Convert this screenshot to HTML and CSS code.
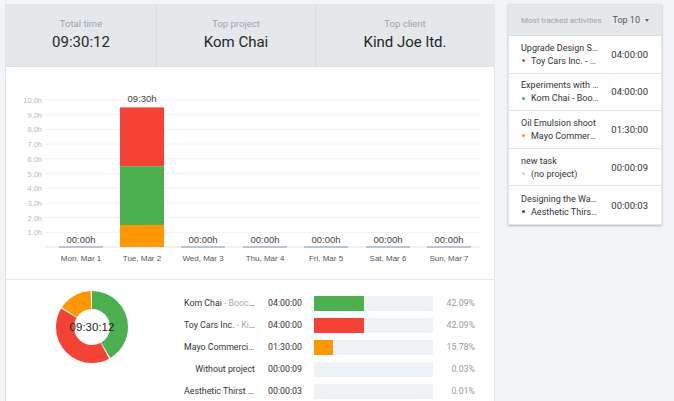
FILE: index.html
```html
<!DOCTYPE html>
<html lang="en">
<head>
  <meta charset="UTF-8">
  <title>Dashboard</title>
  <link rel="stylesheet" href="styles.css">
</head>
<body>
  <div class="main">
    <!-- Summary stats -->
    <div class="stats">
      <div class="stat">
        <span class="stat-label">Total time</span>
        <span class="stat-value">09:30:12</span>
      </div>
      <div class="stat">
        <span class="stat-label">Top project</span>
        <span class="stat-value">Kom Chai</span>
      </div>
      <div class="stat">
        <span class="stat-label">Top client</span>
        <span class="stat-value">Kind Joe ltd.</span>
      </div>
    </div>

    <!-- Bar chart -->
    <div class="chart">
      <svg width="488" height="212" viewBox="6 67 488 212">
        <g class="grid">
          <line x1="45" y1="100" x2="480" y2="100"/>
          <line x1="45" y1="114.7" x2="480" y2="114.7"/>
          <line x1="45" y1="129.4" x2="480" y2="129.4"/>
          <line x1="45" y1="144.1" x2="480" y2="144.1"/>
          <line x1="45" y1="158.8" x2="480" y2="158.8"/>
          <line x1="45" y1="173.5" x2="480" y2="173.5"/>
          <line x1="45" y1="188.2" x2="480" y2="188.2"/>
          <line x1="45" y1="202.9" x2="480" y2="202.9"/>
          <line x1="45" y1="217.6" x2="480" y2="217.6"/>
          <line x1="45" y1="232.3" x2="480" y2="232.3"/>
        </g>
        <g class="ticks">
          <text x="42" y="103">10.0h</text>
          <text x="42" y="117.7">9.0h</text>
          <text x="42" y="132.4">8.0h</text>
          <text x="42" y="147.1">7.0h</text>
          <text x="42" y="161.8">6.0h</text>
          <text x="42" y="176.5">5.0h</text>
          <text x="42" y="191.2">4.0h</text>
          <text x="42" y="205.9">3.0h</text>
          <text x="42" y="220.6">2.0h</text>
          <text x="42" y="235.3">1.0h</text>
        </g>
        <line class="axis" x1="45" y1="247" x2="480" y2="247"/>
        <g class="zero">
          <rect x="59" y="246" width="44" height="2"/>
          <rect x="181" y="246" width="44" height="2"/>
          <rect x="243" y="246" width="44" height="2"/>
          <rect x="304" y="246" width="44" height="2"/>
          <rect x="366" y="246" width="44" height="2"/>
          <rect x="427" y="246" width="44" height="2"/>
        </g>
        <rect x="120" y="107.4" width="44" height="58.8" fill="#f44336"/>
        <rect x="120" y="166.2" width="44" height="58.8" fill="#4caf50"/>
        <rect x="120" y="225" width="44" height="22" fill="#ff9800"/>
        <g class="totals">
          <text x="81" y="243">00:00h</text>
          <text x="142" y="102">09:30h</text>
          <text x="203" y="243">00:00h</text>
          <text x="265" y="243">00:00h</text>
          <text x="326" y="243">00:00h</text>
          <text x="388" y="243">00:00h</text>
          <text x="449" y="243">00:00h</text>
        </g>
        <g class="days">
          <text x="81" y="261">Mon, Mar 1</text>
          <text x="142" y="261">Tue, Mar 2</text>
          <text x="203" y="261">Wed, Mar 3</text>
          <text x="265" y="261">Thu, Mar 4</text>
          <text x="326" y="261">Fri, Mar 5</text>
          <text x="388" y="261">Sat, Mar 6</text>
          <text x="449" y="261">Sun, Mar 7</text>
        </g>
      </svg>
    </div>

    <!-- Project breakdown -->
    <div class="breakdown">
      <div class="donut">
        <svg width="178" height="117" viewBox="6 280 178 117">
          <g transform="rotate(-90 92 327)" fill="none" stroke-width="18">
            <circle cx="92" cy="327" r="27" pathLength="100" stroke="#4caf50" stroke-dasharray="41.5 58.5"/>
            <circle cx="92" cy="327" r="27" pathLength="100" stroke="#f44336" stroke-dasharray="41.5 58.5" stroke-dashoffset="-42.09"/>
            <circle cx="92" cy="327" r="27" pathLength="100" stroke="#ff9800" stroke-dasharray="15.2 84.8" stroke-dashoffset="-84.18"/>
          </g>
          <text x="92" y="331" class="donut-label">09:30:12</text>
        </svg>
      </div>
      <div class="rows">
        <div class="row">
          <span class="name">Kom Chai<span class="client"> - Boocoo</span></span>
          <span class="time">04:00:00</span>
          <span class="track"><span class="fill" style="width: 42.09%; background: #4caf50;"></span></span>
          <span class="pct">42.09%</span>
        </div>
        <div class="row">
          <span class="name">Toy Cars Inc.<span class="client"> - Kind Joe</span></span>
          <span class="time">04:00:00</span>
          <span class="track"><span class="fill" style="width: 42.09%; background: #f44336;"></span></span>
          <span class="pct">42.09%</span>
        </div>
        <div class="row">
          <span class="name">Mayo Commercial</span>
          <span class="time">01:30:00</span>
          <span class="track"><span class="fill" style="width: 15.78%; background: #ff9800;"></span></span>
          <span class="pct">15.78%</span>
        </div>
        <div class="row">
          <span class="name">Without project</span>
          <span class="time">00:00:09</span>
          <span class="track"></span>
          <span class="pct">0.03%</span>
        </div>
        <div class="row">
          <span class="name">Aesthetic Thirst Co</span>
          <span class="time">00:00:03</span>
          <span class="track"></span>
          <span class="pct">0.01%</span>
        </div>
      </div>
    </div>
  </div>

  <!-- Most tracked activities -->
  <div class="side">
    <div class="side-head">
      <span class="side-title">Most tracked activities</span>
      <span class="side-filter">Top 10 <span class="caret"></span></span>
    </div>
    <div class="activity">
      <div class="activity-info">
        <span class="activity-name">Upgrade Design System</span>
        <span class="activity-project"><i class="dot" style="background: #f44336;"></i>Toy Cars Inc. - Kind Joe</span>
      </div>
      <span class="activity-time">04:00:00</span>
    </div>
    <div class="activity">
      <div class="activity-info">
        <span class="activity-name">Experiments with colors</span>
        <span class="activity-project"><i class="dot" style="background: #4caf50;"></i>Kom Chai - Boocoo</span>
      </div>
      <span class="activity-time">04:00:00</span>
    </div>
    <div class="activity">
      <div class="activity-info">
        <span class="activity-name">Oil Emulsion shoot</span>
        <span class="activity-project"><i class="dot" style="background: #ff9800;"></i>Mayo Commercial</span>
      </div>
      <span class="activity-time">01:30:00</span>
    </div>
    <div class="activity">
      <div class="activity-info">
        <span class="activity-name">new task</span>
        <span class="activity-project"><i class="dot" style="background: #d5d8db;"></i>(no project)</span>
      </div>
      <span class="activity-time">00:00:09</span>
    </div>
    <div class="activity">
      <div class="activity-info">
        <span class="activity-name">Designing the Water bottle</span>
        <span class="activity-project"><i class="dot" style="background: #3a3f8f;"></i>Aesthetic Thirst Co</span>
      </div>
      <span class="activity-time">00:00:03</span>
    </div>
  </div>
</body>
</html>
```

FILE: styles.css
```css
* {
  box-sizing: border-box;
  margin: 0;
  padding: 0;
}

body {
  font-family: Roboto, "Liberation Sans", sans-serif;
  background-color: #f2f4f7;
  display: flex;
  align-items: flex-start;
  gap: 13px;
  padding: 4px 0 0 5px;
  height: 401px;
  overflow: hidden;
  color: #333;
}

/* Left panel */
.main {
  width: 490px;
  height: 397px;
  background-color: #ffffff;
  border-left: 1px solid #dbe2e3;
  border-right: 1px solid #e3e7ea;
}

.stats {
  display: grid;
  grid-template-columns: 151px 159px 1fr;
  height: 63px;
  background-color: #e4e8eb;
  border-bottom: 1px solid #dde2e5;
}

.stat {
  display: flex;
  flex-direction: column;
  align-items: center;
  padding-top: 14px;
  border-right: 1px solid #d6dbdf;
}

.stat:last-child {
  border-right: none;
}

.stat-label {
  font-size: 9.5px;
  line-height: 12px;
  color: #9ba5ae;
}

.stat-value {
  font-size: 15px;
  line-height: 18px;
  margin-top: 3px;
  color: #262626;
}

/* Bar chart */
.chart {
  height: 213px;
  border-bottom: 1px solid #e6e9ec;
}

.chart svg {
  display: block;
}

.grid line {
  stroke: #eff1f3;
  stroke-width: 1;
}

.ticks text {
  font-family: "Liberation Sans", sans-serif;
  font-size: 7.5px;
  fill: #b8b8b8;
  text-anchor: end;
}

.axis {
  stroke: #dfe5e9;
  stroke-width: 1;
}

.zero rect {
  fill: #b9c6cf;
}

.totals text {
  font-family: "Liberation Sans", sans-serif;
  font-size: 9.5px;
  fill: #444;
  text-anchor: middle;
}

.days text {
  font-family: "Liberation Sans", sans-serif;
  font-size: 8px;
  fill: #555;
  text-anchor: middle;
}

/* Breakdown */
.breakdown {
  display: flex;
}

.donut svg {
  display: block;
}

.donut-label {
  font-family: "Liberation Sans", sans-serif;
  font-size: 11.5px;
  fill: #1e1e1e;
  text-anchor: middle;
}

.rows {
  padding-top: 12px;
}

.row {
  display: grid;
  grid-template-columns: 71px 59px 119px 42px;
  align-items: center;
  height: 22px;
  font-size: 8.8px;
}

.name {
  text-align: right;
  white-space: nowrap;
  overflow: hidden;
  text-overflow: ellipsis;
  color: #333;
}

.client {
  color: #aaa;
}

.time {
  padding-left: 13px;
  color: #333;
}

.track {
  display: block;
  height: 15px;
  background-color: #eef2f5;
}

.fill {
  display: block;
  height: 100%;
}

.pct {
  text-align: right;
  color: #9a9a9a;
}

/* Right panel */
.side {
  width: 154px;
  background-color: #ffffff;
  box-shadow: 0 1px 2px rgba(0, 0, 0, 0.25);
  border: 1px solid #e1e5e8;
}

.side-head {
  display: flex;
  justify-content: space-between;
  align-items: center;
  height: 31px;
  padding: 0 12px 0 12px;
  background-color: #e4e8eb;
  border-bottom: 1px solid #d9dee2;
}

.side-title {
  font-size: 8px;
  color: #9aa3ab;
}

.side-filter {
  font-size: 9px;
  color: #555;
  display: flex;
  align-items: center;
}

.caret {
  display: inline-block;
  margin-left: 5px;
  border-left: 2.5px solid transparent;
  border-right: 2.5px solid transparent;
  border-top: 3px solid #666;
}

.activity {
  display: flex;
  align-items: center;
  justify-content: space-between;
  height: 37.6px;
  padding: 0 13px 0 12px;
  border-bottom: 1px solid #e3e6e9;
}

.activity:last-child {
  border-bottom: none;
}

.activity-info {
  display: flex;
  flex-direction: column;
  gap: 3px;
  width: 78px;
}

.activity-name,
.activity-project {
  font-size: 9px;
  white-space: nowrap;
  overflow: hidden;
  text-overflow: ellipsis;
  color: #333;
}

.activity-project {
  display: block;
}

.dot {
  display: inline-block;
  width: 3px;
  height: 3px;
  border-radius: 50%;
  margin: 0 6px 2px 1px;
  vertical-align: middle;
}

.activity-time {
  font-size: 9.5px;
  color: #333;
}
```
